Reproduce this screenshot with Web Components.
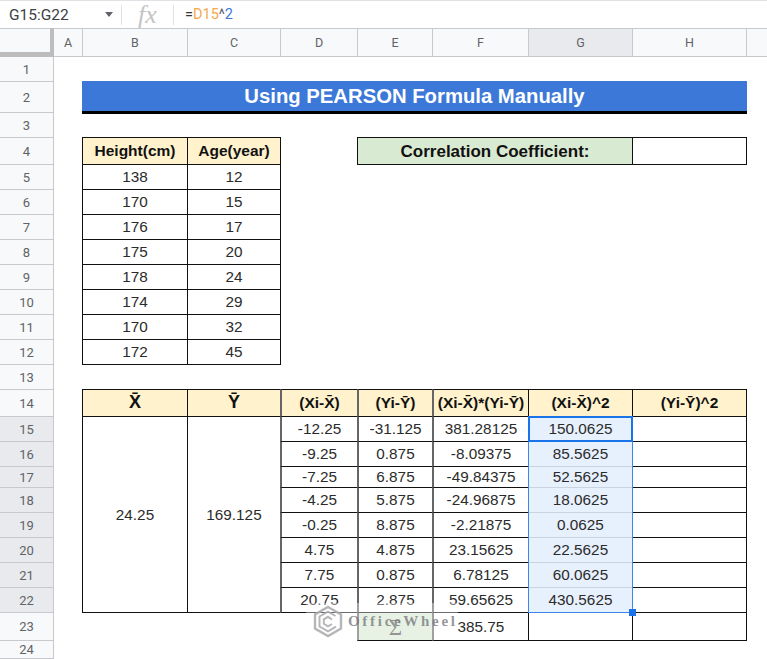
<!DOCTYPE html>
<html>
<head>
<meta charset="utf-8">
<title>Using PEARSON Formula Manually</title>
<style>
  html, body { margin: 0; height: 100%; background: #fff; overflow: hidden; }
  body { position: relative; font-family: "Liberation Sans", Arial, sans-serif; }
</style>
</head>
<body>
<formula-bar name="G15:G22"><span style="color:#333">=</span><span style="color:#f6a94b">D15</span><span style="color:#5f6368">^</span><span style="color:#3c78d8">2</span></formula-bar>
<sheet-grid id="grid"></sheet-grid>
<office-mark></office-mark>

<script>
  class FormulaBar extends HTMLElement {
    constructor(){
      super();
      this.attachShadow({mode: 'open'}).innerHTML = `
      <style>
        :host { display: flex; align-items: center; height: 28px; box-sizing: border-box; border-top: 1px solid #e0e1e5; background: #fff; font-family: Roboto, sans-serif; }
        .name { width: 96px; padding-left: 9px; font-size: 15.5px; color: #3c4043; }
        .arrow { width: 0; height: 0; border: 4px solid transparent; border-top: 5px solid #5f6368; border-bottom: 0; margin-right: 8px; }
        .sep { width: 1px; height: 20px; background: #dfe1e5; }
        .fx { width: 51px; text-align: center; font: italic 26px "Liberation Serif", serif; color: #c4c4c4; line-height: 24px; }
        .text { padding-left: 11px; font-size: 14.5px; }
      </style>
      <div class="name"></div><div class="arrow"></div><div class="sep"></div>
      <div class="fx">fx</div><div class="sep"></div>
      <div class="text"><slot></slot></div>`;
      this.shadowRoot.querySelector('.name').textContent = this.getAttribute('name');
    }
  }
  customElements.define('formula-bar', FormulaBar);

  class SheetGrid extends HTMLElement {
    constructor(){
      super();
      this.attachShadow({mode: 'open'}).innerHTML = `
      <style>
        :host {
          display: grid;
          grid-template-columns: 54px 29px 105px 93px 77px 75px 96px 104px 114px 20px;
          grid-template-rows: 29px 25px 31px 25px 27px repeat(8, 25px) 25px 27px 25px 25px 21px repeat(5, 25px) 28px 18px;
          font-family: "Liberation Sans", Arial, sans-serif;
          overflow: hidden;
        }
      </style>
      <slot></slot>`;
    }
  }
  customElements.define('sheet-grid', SheetGrid);

  // row / column header of the sheet
  class SheetHead extends HTMLElement {
    constructor(){
      super();
      this.attachShadow({mode: 'open'}).innerHTML = `
      <style>
        :host { display: flex; align-items: center; justify-content: center; box-sizing: border-box; background: #f8f9fa; color: #5f6368; font: 13px Roboto, sans-serif; border-right: 1px solid #c7c9cc; border-bottom: 1px solid #c7c9cc; }
        :host([top]) { border-top: 1px solid #c7c9cc; font-size: 12.5px; }
        :host([on]) { background: #e8eaed; }
        :host([corner]) { border-right: 4px solid #bdbdbd; border-bottom: 5px solid #bdbdbd; }
        :host([open]) { border-right: 0; }
      </style>
      <slot></slot>`;
    }
    connectedCallback(){
      this.style.gridColumn = this.getAttribute('col');
      this.style.gridRow = this.getAttribute('row');
    }
  }
  customElements.define('sheet-head', SheetHead);

  class SheetCell extends HTMLElement {
    constructor(){
      super();
      this.attachShadow({mode: 'open'}).innerHTML = `
      <style>
        :host { display: flex; align-items: center; justify-content: center; box-sizing: border-box; margin: -1px 0 0 -1px; border: 1px solid #111; color: #2b2b2b; font-size: 15.3px; white-space: nowrap; }
        :host([head]) { background: #fff2cc; color: #111; font-weight: 700; font-size: 15.5px; }
        :host([big]) { font-size: 18px; padding-bottom: 2px; }
        :host([green]) { background: #d9ead3; }
        :host([soft]) { border-left: 2px solid #666; }
        :host([sel]) { background: #e7f0fd; border-top-color: #cad3e0; border-bottom-color: #cad3e0; }
        :host([label]) { font-size: 17px; font-weight: 700; color: #111; padding-top: 2px; }
        :host([sum]) { font: 23px "Liberation Serif", serif; color: #555; padding-top: 2px; }
        :host([banner]) { margin-bottom: -1px; border: 0; border-bottom: 3px solid #000; background: #3c78d8; color: #fff; font-size: 20.3px; font-weight: 700; }
      </style>
      <slot></slot>`;
    }
    connectedCallback(){
      this.style.gridColumn = this.getAttribute('col');
      this.style.gridRow = this.getAttribute('row');
    }
  }
  customElements.define('sheet-cell', SheetCell);

  // blue outline of the selected range, with its fill handle
  class SheetRange extends HTMLElement {
    constructor(){
      super();
      this.attachShadow({mode: 'open'}).innerHTML = `
      <style>
        :host { position: relative; display: block; box-sizing: border-box; margin: -1px 0 0 -1px; border: 1px solid #3d86ea; pointer-events: none; }
        :host([active]) { border: 2px solid #1a73e8; }
        .handle { position: absolute; right: -4px; bottom: -4px; width: 7px; height: 7px; background: #1a73e8; }
        :host([active]) .handle { display: none; }
      </style>
      <div class="handle"></div>`;
    }
    connectedCallback(){
      this.style.gridColumn = this.getAttribute('col');
      this.style.gridRow = this.getAttribute('row');
    }
  }
  customElements.define('sheet-range', SheetRange);

  // watermark lying over the sheet
  class OfficeMark extends HTMLElement {
    constructor(){
      super();
      this.attachShadow({mode: 'open'}).innerHTML = `
      <style>
        :host { position: absolute; left: 306px; top: 603px; width: 152px; height: 37px; display: flex; align-items: center; gap: 5px; padding-left: 7px; box-sizing: border-box; background: rgba(255,255,255,.38); pointer-events: none; overflow: visible; }
        svg { flex: none; }
        span { font: 700 15px "Liberation Serif", serif; letter-spacing: 2.7px; color: rgba(120,120,125,.78); white-space: nowrap; margin-top: -1px; }
      </style>
      <svg width="30" height="33" viewBox="0 0 30 33" fill="none" stroke="#a9a9ad" stroke-opacity=".85">
        <path stroke-width="2.4" d="M15 2 28 9.5V23.5L15 31 2 23.5V9.5Z"/>
        <path stroke-width="2" d="M22.5 11 15 6.7 6.5 11.5V21.500L15 26.300 23 21.700"/>
        <path stroke-width="2" d="M19 14.500 15 11.800 10.800 14.300V18.800L15 21.400 19 19"/>
      </svg>
      <span>OfficeWheel</span>`;
    }
  }
  customElements.define('office-mark', OfficeMark);

  const grid = document.getElementById('grid');
  const colNames = ['A','B','C','D','E','F','G','H',''];
  const colLine = name => colNames.indexOf(name) + 2;
  // row 1 of the sheet sits on grid row 2, under the letters
  const rowLine = r => r + 1;

  function add(tag, text, attrs){
    const el = document.createElement(tag);
    for (const k in attrs) el.setAttribute(k, attrs[k]);
    el.textContent = text;
    grid.appendChild(el);
  }
  function cell(col, row, text, flags = '', endCol, endRow){
    const attrs = {
      col: colLine(col) + (endCol ? ' / ' + (colLine(endCol) + 1) : ''),
      row: rowLine(row) + (endRow ? ' / ' + (rowLine(endRow) + 1) : '')
    };
    flags.split(' ').filter(Boolean).forEach(f => attrs[f] = '');
    add('sheet-cell', text, attrs);
  }

  add('sheet-head', '', {col: 1, row: 1, top: '', corner: ''});
  colNames.forEach(n => {
    const attrs = {col: colLine(n), row: 1, top: ''};
    if (n === 'G') attrs.on = '';
    if (n === '') attrs.open = '';
    add('sheet-head', n, attrs);
  });
  for (let r = 1; r <= 24; r++) {
    add('sheet-head', r, Object.assign({col: 1, row: rowLine(r)}, r >= 15 && r <= 22 ? {on: ''} : {}));
  }

  cell('B', 2, 'Using PEARSON Formula Manually', 'banner', 'H');

  cell('E', 4, 'Correlation Coefficient:', 'green label', 'G');
  cell('H', 4, '');

  cell('B', 4, 'Height(cm)', 'head');
  cell('C', 4, 'Age(year)', 'head');
  const heights = [138,170,176,175,178,174,170,172];
  const ages = [12,15,17,20,24,29,32,45];
  heights.forEach((h, i) => {
    cell('B', 5 + i, h);
    cell('C', 5 + i, ages[i]);
  });

  cell('B', 14, 'X\u0304', 'head big');
  cell('C', 14, 'Y\u0304', 'head big');
  cell('D', 14, '(Xi-X\u0304)', 'head soft');
  cell('E', 14, '(Yi-Y\u0304)', 'head soft');
  cell('F', 14, '(Xi-X\u0304)*(Yi-Y\u0304)', 'head soft');
  cell('G', 14, '(Xi-X\u0304)^2', 'head');
  cell('H', 14, '(Yi-Y\u0304)^2', 'head');

  cell('B', 15, '24.25', '', null, 22);
  cell('C', 15, '169.125', '', null, 22);
  const rows = [
    ['-12.25','-31.125','381.28125','150.0625'],
    ['-9.25','0.875','-8.09375','85.5625'],
    ['-7.25','6.875','-49.84375','52.5625'],
    ['-4.25','5.875','-24.96875','18.0625'],
    ['-0.25','8.875','-2.21875','0.0625'],
    ['4.75','4.875','23.15625','22.5625'],
    ['7.75','0.875','6.78125','60.0625'],
    ['20.75','2.875','59.65625','430.5625']
  ];
  rows.forEach((vals, i) => {
    cell('D', 15 + i, vals[0], 'soft');
    cell('E', 15 + i, vals[1], 'soft');
    cell('F', 15 + i, vals[2], 'soft');
    cell('G', 15 + i, vals[3], 'sel');
    cell('H', 15 + i, '');
  });

  cell('E', 23, '\u03a3', 'green soft sum');
  cell('F', 23, '385.75', 'soft');
  cell('G', 23, '');
  cell('H', 23, '');

  add('sheet-range', '', {col: colLine('G'), row: rowLine(15) + ' / ' + (rowLine(22) + 1)});
  add('sheet-range', '', {col: colLine('G'), row: rowLine(15), active: ''});
</script>
</body>
</html>
